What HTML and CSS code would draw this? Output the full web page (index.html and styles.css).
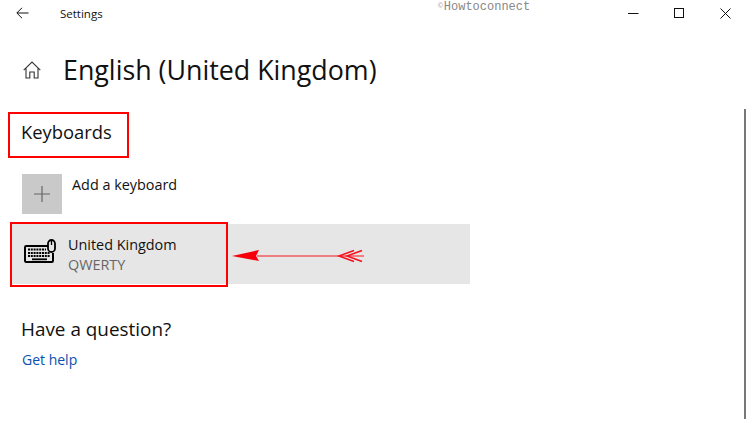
FILE: index.html
```html
<!DOCTYPE html>
<html lang="en">
<head>
<meta charset="utf-8">
<title>Settings</title>
<link rel="stylesheet" href="styles.css">
</head>
<body>
<div class="window">
  <header class="titlebar">
    <svg class="back" width="13" height="12" viewBox="0 0 13 12"><path d="M12.5 6H1M6 .8 .8 6 6 11.2" fill="none" stroke="#111" stroke-width="1"/></svg>
    <span class="app-name">Settings</span>
    <span class="watermark"><span class="copy">©</span>Howtoconnect</span>
    <div class="controls">
      <svg width="11" height="11" viewBox="0 0 11 11"><path d="M0 5.5H10.5" stroke="#111" fill="none"/></svg>
      <svg width="11" height="11" viewBox="0 0 11 11"><rect x=".5" y=".5" width="9" height="9" stroke="#111" fill="none"/></svg>
      <svg width="11" height="11" viewBox="0 0 11 11"><path d="M.5.5 10.5 10.5M10.5.5 .5 10.5" stroke="#111" fill="none"/></svg>
    </div>
  </header>
  <main class="content">
    <div class="page-head">
      <svg class="home" width="18" height="18" viewBox="0 0 18 18"><path d="M.7 9.2 9 1l8.3 8.2M3 7.2V17h3.8v-6h4.4v6H15V7.2" fill="none" stroke="#333" stroke-width="1.1"/></svg>
      <h1>English (United Kingdom)</h1>
    </div>
    <h2 class="section-title keyboards">Keyboards</h2>
    <div class="add-row">
      <span class="add-tile"><svg width="16" height="16" viewBox="0 0 16 16"><path d="M8 0V16M0 8H16" stroke="#666" stroke-width="1.2"/></svg></span>
      <span class="add-label">Add a keyboard</span>
    </div>
    <div class="kb-row">
      <svg class="kb-icon" width="32" height="24" viewBox="0 0 32 24">
        <path d="M24 7H2.2A1.2 1.2 0 0 0 1 8.2v13.6A1.2 1.2 0 0 0 2.2 23h25.6a1.2 1.2 0 0 0 1.2-1.2V14" fill="none" stroke="#000" stroke-width="2"/>
        <rect x="24" y="1" width="7" height="12" rx="3.5" fill="#e6e6e6" stroke="#000" stroke-width="1.8"/>
        <path d="M27.5 2v4" stroke="#000" stroke-width="1.3"/>
        <path d="M4 10.5h18M4 14h22M4 17h22" stroke="#000" stroke-width="1.8" stroke-dasharray="2 .8" fill="none"/>
        <path d="M8 20.3h15" stroke="#000" stroke-width="1.8" fill="none"/>
      </svg>
      <div class="kb-text">
        <span class="kb-name">United Kingdom</span>
        <span class="kb-layout">QWERTY</span>
      </div>
    </div>
    <h2 class="section-title question">Have a question?</h2>
    <a class="help" href="#">Get help</a>
  </main>
  <div class="scrollbar"></div>
  <div class="mark mark-keyboards"></div>
  <div class="mark mark-row"></div>
  <svg class="arrow" width="134" height="14" viewBox="0 0 134 14">
    <path d="M26 7H133" stroke="#f25a60" stroke-width="1.6"/>
    <path d="M1 7 28 1 25 7 28 12Z" fill="#f5000a"/>
    <path d="M131 1.5 116 7 131 12.5M123 1.5 108 7 123 12.5" fill="none" stroke="#f5101a" stroke-width="1.5"/>
  </svg>
</div>
</body>
</html>
```
FILE: styles.css
```css
* { box-sizing: border-box; }
html, body { margin: 0; padding: 0; }
body { background: #fff; font-family: "Open Sans", "Noto Sans", sans-serif; color: #111; }
.window { position: relative; width: 747px; height: 434px; overflow: hidden; background: #fff; }
.titlebar { display: flex; align-items: center; height: 26px; padding-left: 16px; }
.back { margin-right: 31px; }
.app-name { font-size: 11.5px; }
.watermark { position: absolute; left: 438px; top: 0; font-family: "Liberation Mono", monospace; font-size: 12px; line-height: 11px; color: #888; }
.copy { font-size: 8px; vertical-align: 2px; margin-right: 1px; color: #aaa; }
.controls { display: flex; align-items: center; gap: 35px; margin-left: auto; margin-right: 16px; }
.content { padding-left: 22px; }
.page-head { display: flex; align-items: center; gap: 22px; margin-top: 24px; height: 40px; padding-left: 1px; }
h1 { margin: 0; font-size: 26.8px; font-weight: 400; line-height: 40px; }
.section-title { margin: 0; font-size: 19px; font-weight: 400; line-height: 26px; margin-left: -1px; }
.keyboards { margin-top: 29px; font-size: 18.4px; }
.add-row { display: flex; gap: 10px; margin-top: 29px; height: 40px; }
.add-tile { display: flex; align-items: center; justify-content: center; width: 40px; height: 40px; background: #c9c9c9; }
.add-label { font-size: 14.4px; line-height: 20px; margin-top: 1px; }
.kb-row { display: flex; align-items: center; gap: 12px; width: 459px; height: 60px; margin: 10px 0 0 -11px; padding-left: 13px; background: #e6e6e6; }
.kb-icon { flex: none; margin-top: -7px; }
.kb-text { display: flex; flex-direction: column; padding-top: 1px; }
.kb-name { font-size: 14.4px; line-height: 20px; }
.kb-layout { font-size: 14.4px; line-height: 20px; color: #666; }
.question { margin-top: 32px; font-size: 18.9px; }
.help { display: block; margin-top: 8px; font-size: 14px; line-height: 20px; color: #0a50b0; text-decoration: none; }
.scrollbar { position: absolute; left: 744px; top: 109px; width: 2px; height: 310px; background: #777; }
.mark { position: absolute; border: 2px solid #f00; }
.mark-keyboards { left: 8px; top: 112px; width: 121px; height: 46px; }
.mark-row { left: 10px; top: 222px; width: 218px; height: 65px; }
.arrow { position: absolute; left: 231px; top: 249px; }
```
